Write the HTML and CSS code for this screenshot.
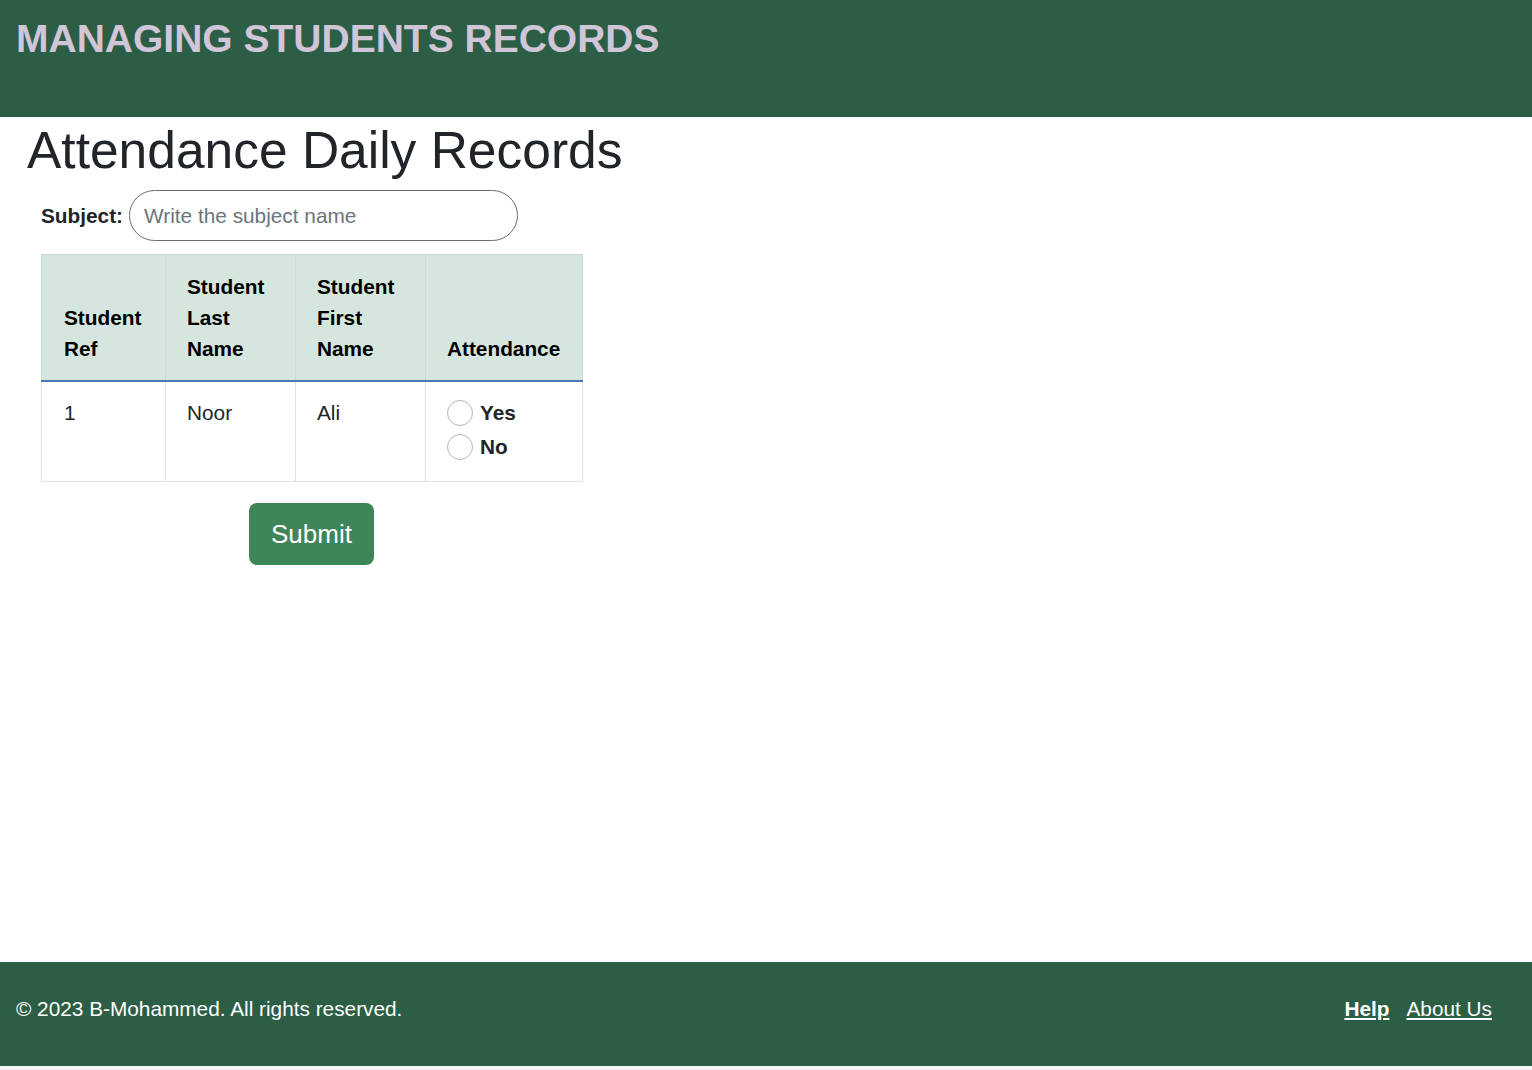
FILE: index.html
```html
<!DOCTYPE html>
<html lang="en">
<head>
<meta charset="utf-8">
<title>Attendance Daily Records</title>
<link rel="stylesheet" href="styles.css">
</head>
<body>
<header class="site-header">
  <div class="brand">MANAGING STUDENTS RECORDS</div>
</header>
<main class="main">
  <h1 class="page-title">Attendance Daily Records</h1>
  <form class="att-form">
    <div class="subject-row">
      <label class="subject-label" for="subject">Subject:</label>
      <input class="subject-input" id="subject" type="text" placeholder="Write the subject name">
    </div>
    <table class="att-table">
      <thead>
        <tr>
          <th class="c1">Student<br>Ref</th>
          <th class="c2">Student<br>Last<br>Name</th>
          <th class="c3">Student<br>First<br>Name</th>
          <th class="c4">Attendance</th>
        </tr>
      </thead>
      <tbody>
        <tr>
          <td>1</td>
          <td>Noor</td>
          <td>Ali</td>
          <td>
            <label class="radio-opt"><span class="radio"></span>Yes</label>
            <label class="radio-opt"><span class="radio"></span>No</label>
          </td>
        </tr>
      </tbody>
    </table>
    <div class="submit-row">
      <button class="submit-btn" type="button">Submit</button>
    </div>
  </form>
</main>
<footer class="site-footer">
  <div class="copy">© 2023 B-Mohammed. All rights reserved.</div>
  <nav class="foot-links">
    <a class="help" href="#">Help</a>
    <a class="about" href="#">About Us</a>
  </nav>
</footer>
</body>
</html>
```
FILE: styles.css
```css
html {
  background: #f4f4f4;
}
body {
  margin: 0;
  background: #ffffff;
  min-height: calc(100vh - 4px);
  display: flex;
  flex-direction: column;
  font-family: "Liberation Sans", Arial, sans-serif;
  color: #212529;
}
.site-header {
  background: #2c5d45;
  height: 117px;
  box-sizing: border-box;
  padding: 16px 16px 0 16px;
}
.brand {
  color: #d0c6d8;
  font-weight: bold;
  font-size: 39px;
  line-height: 46px;
}
.main {
  flex: 1;
  padding: 0 0 0 27px;
}
.page-title {
  margin: 3px 0 0 0;
  font-weight: normal;
  font-size: 51.5px;
  line-height: 60px;
  color: #212529;
}
.att-form {
  padding-left: 14px;
}
.subject-row {
  display: flex;
  align-items: center;
  gap: 6px;
  margin-top: 10px;
}
.subject-label {
  font-weight: bold;
  font-size: 20.8px;
}
.subject-input {
  width: 389px;
  height: 51px;
  box-sizing: border-box;
  border: 1px solid #6c6c6c;
  border-radius: 26px;
  padding: 0 14px;
  font-family: inherit;
  font-size: 20.8px;
  color: #212529;
  outline: none;
}
.subject-input::placeholder {
  color: #6c757d;
}
.att-table {
  margin-top: 13px;
  border-collapse: collapse;
  font-size: 20.8px;
  line-height: 31px;
}
.att-table th {
  background: #d4e6de;
  text-align: left;
  vertical-align: bottom;
  font-weight: bold;
  color: #000;
  padding: 16px 21px 16px 21px;
  border: 1px solid #c9dbd3;
  border-bottom: 2px solid #4a79b8;
}
.att-table th.c1 { width: 80px; padding-left: 22px; }
.att-table th.c2 { width: 87px; }
.att-table th.c3 { width: 87px; }
.att-table th.c4 { width: 114px; }
.att-table td {
  vertical-align: top;
  padding: 15px 21px 17px 21px;
  border: 1px solid #e2e2e2;
  color: #212529;
}
.att-table td:first-child {
  padding-left: 22px;
}
.radio-opt {
  display: flex;
  align-items: center;
  gap: 7px;
  font-weight: bold;
  height: 34px;
  line-height: 34px;
}
.att-table td .radio-opt:first-child {
  margin-top: -1px;
}
.radio {
  width: 24px;
  height: 24px;
  border: 1px solid #b5b5b5;
  border-radius: 50%;
  background: #fff;
  flex: none;
}
.submit-row {
  width: 541px;
  display: flex;
  justify-content: center;
  margin-top: 21px;
}
.submit-btn {
  background: #3f855a;
  color: #fff;
  border: none;
  border-radius: 8px;
  width: 125px;
  height: 62px;
  font-family: inherit;
  font-size: 26px;
  padding: 0;
}
.site-footer {
  background: #2c5d45;
  height: 104px;
  box-sizing: border-box;
  display: flex;
  align-items: flex-start;
  justify-content: space-between;
  padding: 35px 40px 0 16px;
  color: #fff;
  font-size: 20.8px;
}
.foot-links {
  display: flex;
  gap: 17px;
}
.foot-links a {
  color: #fff;
  text-decoration: underline;
}
.foot-links .help {
  font-weight: bold;
}
```
